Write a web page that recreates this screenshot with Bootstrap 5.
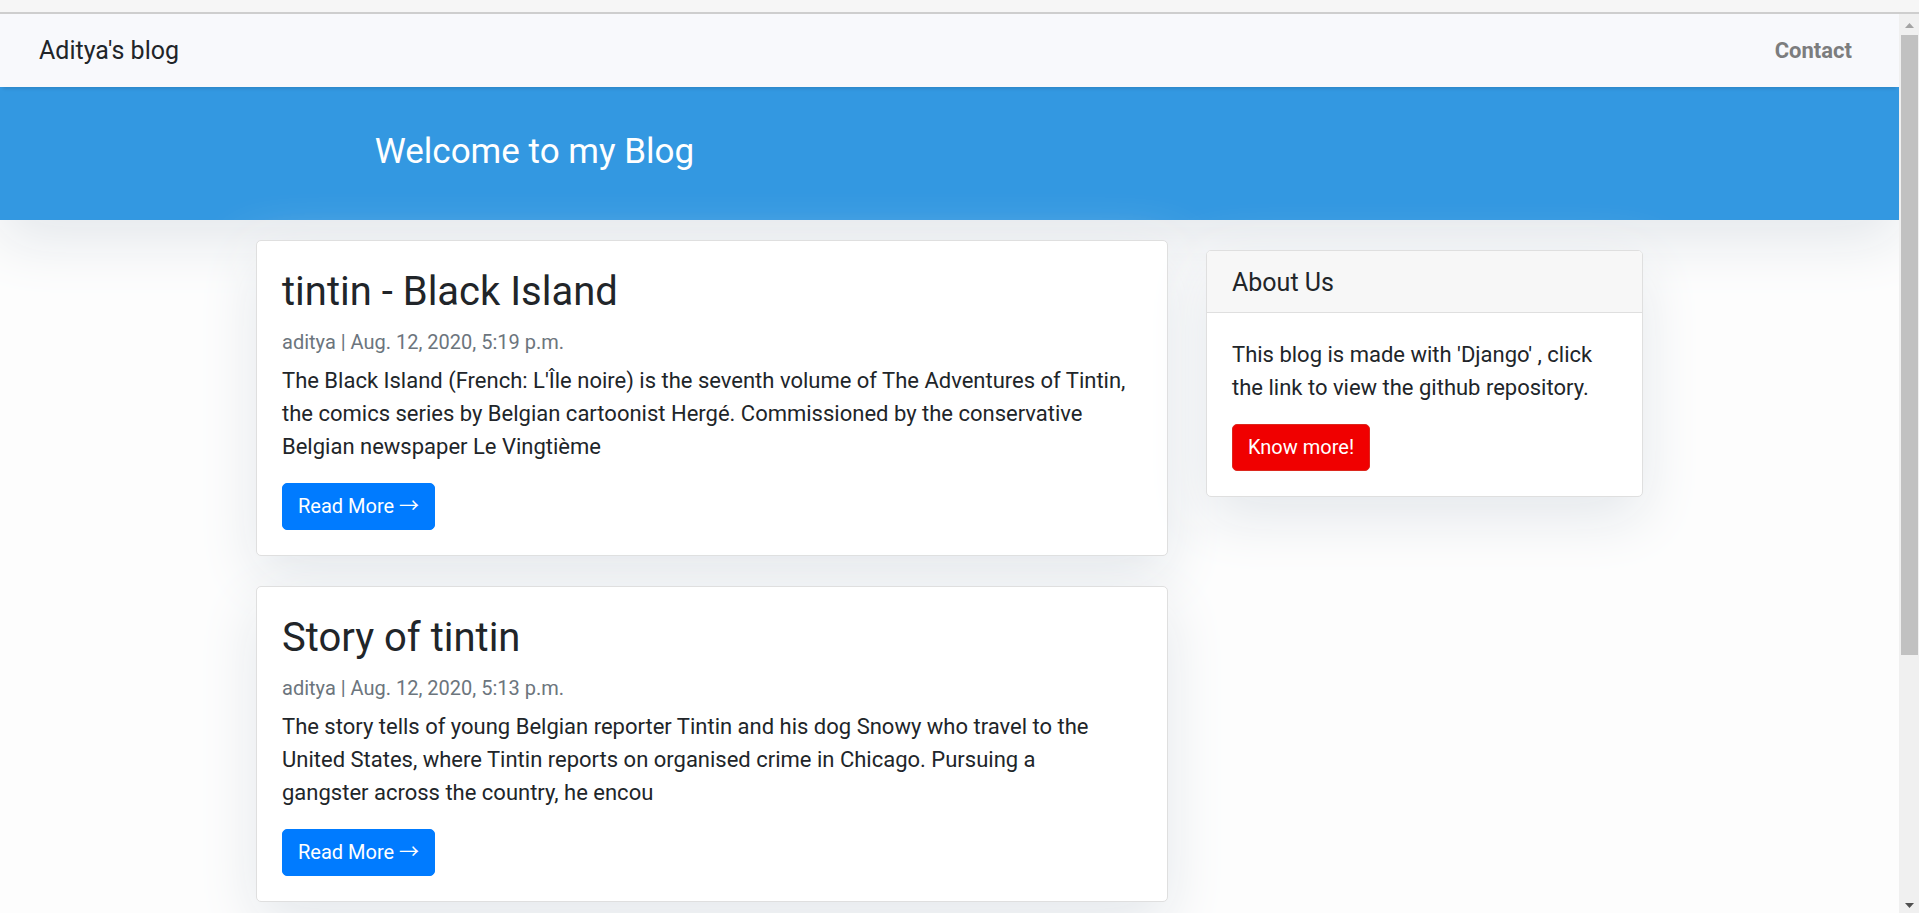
<!DOCTYPE html>
<html lang="en">
<head>
<meta charset="utf-8">
<meta name="viewport" content="width=device-width, initial-scale=1">
<title>Aditya's blog</title>
<link href="https://cdn.jsdelivr.net/npm/bootstrap@5.3.0/dist/css/bootstrap.min.css" rel="stylesheet">
<style>
  body {
    font-family: Roboto, "Liberation Sans", sans-serif;
    font-size: 22px;
    line-height: 33px;
    color: #212529;
    background: #fdfdfd;
  }
  .window-edge { height: 14px; background: #f6f6f6; border-bottom: 2px solid #cecece; }
  .viewport { min-height: 0; }

  .site-nav {
    --bs-navbar-padding-y: 10px;
    padding-left: 39px;
    padding-right: 39px;
    height: 73px;
    background: #f8f9fc;
    box-shadow: 0 5px 3px -3px rgba(0, 0, 0, .1);
    z-index: 2;
  }
  .site-nav .navbar-brand { font-size: 25px; line-height: 38px; color: #212529; }
  .site-nav .nav-link { padding: 10px 11px; font-weight: 700; color: #7c7d7e; }

  .masthead {
    padding: 44px 0 47px;
    background: #3398e1;
    box-shadow: 0 20px 60px #e3e7eb;
  }
  .masthead h1 { font-size: 35px; line-height: 42px; font-weight: 400; color: #fff; }

  .blog-container { max-width: 1425px; --bs-gutter-x: 38px; }
  .blog-container > .row { --bs-gutter-x: 38px; }

  .card {
    --bs-card-border-radius: 5px;
    --bs-card-inner-border-radius: 4px;
    --bs-card-border-color: #dfdfdf;
    --bs-card-spacer-x: 25px;
    --bs-card-spacer-y: 25px;
    --bs-card-cap-bg: #f7f7f7;
    --bs-card-bg: #fff;
    box-shadow: 0 20px 60px #e3e7eb;
  }
  .card-header { padding: 16px 25px 14px; }
  .posts { padding-top: 20px; }
  .posts .card { margin-bottom: 30px; }
  .sidebar { padding-top: 30px; }
  .post-title { font-size: 40px; line-height: 52px; font-weight: 400; margin-bottom: 9px; }
  .post-meta { font-size: 20px; line-height: 30px; color: #6c757d; margin-bottom: 7px; }
  .card-text { margin-bottom: 20px; }
  .about-title { font-size: 25px; line-height: 31px; font-weight: 400; }

  .btn {
    --bs-btn-font-size: 20px;
    --bs-btn-line-height: 29px;
    --bs-btn-padding-x: 15px;
    --bs-btn-padding-y: 8px;
    --bs-btn-border-radius: 5px;
    display: block;
    width: fit-content;
  }
  .btn-primary { --bs-btn-bg: #007bff; --bs-btn-border-color: #007bff; }
  .btn-danger { --bs-btn-bg: #f00000; --bs-btn-border-color: #dc281e; }
  .more-arrow { font-family: "Noto Sans CJK JP", sans-serif; line-height: 1; }

  .scroll-rail { width: 20px; background: #f0f0f0; padding: 9px 1px 5px 2px; }
  .scroll-rail svg { width: 9px; height: 5px; display: block; }
  .scroll-thumb { width: 17px; height: 70%; margin-top: 7px; background: #c1c1c1; }
</style>
</head>
<body>
<div class="vh-100 d-flex flex-column overflow-hidden">
  <div class="window-edge flex-shrink-0"></div>
  <div class="viewport d-flex flex-grow-1">
    <div class="flex-grow-1 overflow-hidden">
      <nav class="navbar navbar-expand site-nav">
        <a class="navbar-brand" href="#">Aditya's blog</a>
        <ul class="navbar-nav ms-auto">
          <li class="nav-item"><a class="nav-link" href="#">Contact</a></li>
        </ul>
      </nav>

      <header class="masthead">
        <div class="container blog-container">
          <div class="row">
            <div class="col-md-10 mx-auto">
              <h1 class="m-0">Welcome to my Blog</h1>
            </div>
          </div>
        </div>
      </header>

      <main class="container blog-container">
        <div class="row">
          <div class="col-md-8 posts">
            <article class="card">
              <div class="card-body">
                <h2 class="post-title">tintin - Black Island</h2>
                <p class="post-meta">aditya | Aug. 12, 2020, 5:19 p.m.</p>
                <p class="card-text">The Black Island (French: L'Île noire) is the seventh volume of The Adventures of Tintin, the comics series by Belgian cartoonist Hergé. Commissioned by the conservative Belgian newspaper Le Vingtième</p>
                <a href="#" class="btn btn-primary">Read More <span class="more-arrow">→</span></a>
              </div>
            </article>
            <article class="card">
              <div class="card-body">
                <h2 class="post-title">Story of tintin</h2>
                <p class="post-meta">aditya | Aug. 12, 2020, 5:13 p.m.</p>
                <p class="card-text">The story tells of young Belgian reporter Tintin and his dog Snowy who travel to the United States, where Tintin reports on organised crime in Chicago. Pursuing a<br>gangster across the country, he encou</p>
                <a href="#" class="btn btn-primary">Read More <span class="more-arrow">→</span></a>
              </div>
            </article>
          </div>
          <aside class="col-md-4 sidebar">
            <div class="card">
              <div class="card-header"><h5 class="about-title m-0">About Us</h5></div>
              <div class="card-body">
                <p class="card-text">This blog is made with 'Django' , click the link to view the github repository.</p>
                <a href="#" class="btn btn-danger">Know more!</a>
              </div>
            </div>
          </aside>
        </div>
      </main>
    </div>

    <div class="scroll-rail d-flex flex-column align-items-center flex-shrink-0" aria-hidden="true">
      <svg viewBox="0 0 9 5"><path d="M0 5 4.500 0 9 5z" fill="#a3a3a3"/></svg>
      <div class="scroll-thumb"></div>
      <svg class="mt-auto" viewBox="0 0 9 5"><path d="M0 0 4.500 5 9 0z" fill="#505050"/></svg>
    </div>
  </div>
</div>
<script src="https://cdn.jsdelivr.net/npm/bootstrap@5.3.0/dist/js/bootstrap.bundle.min.js"></script>
</body>
</html>
